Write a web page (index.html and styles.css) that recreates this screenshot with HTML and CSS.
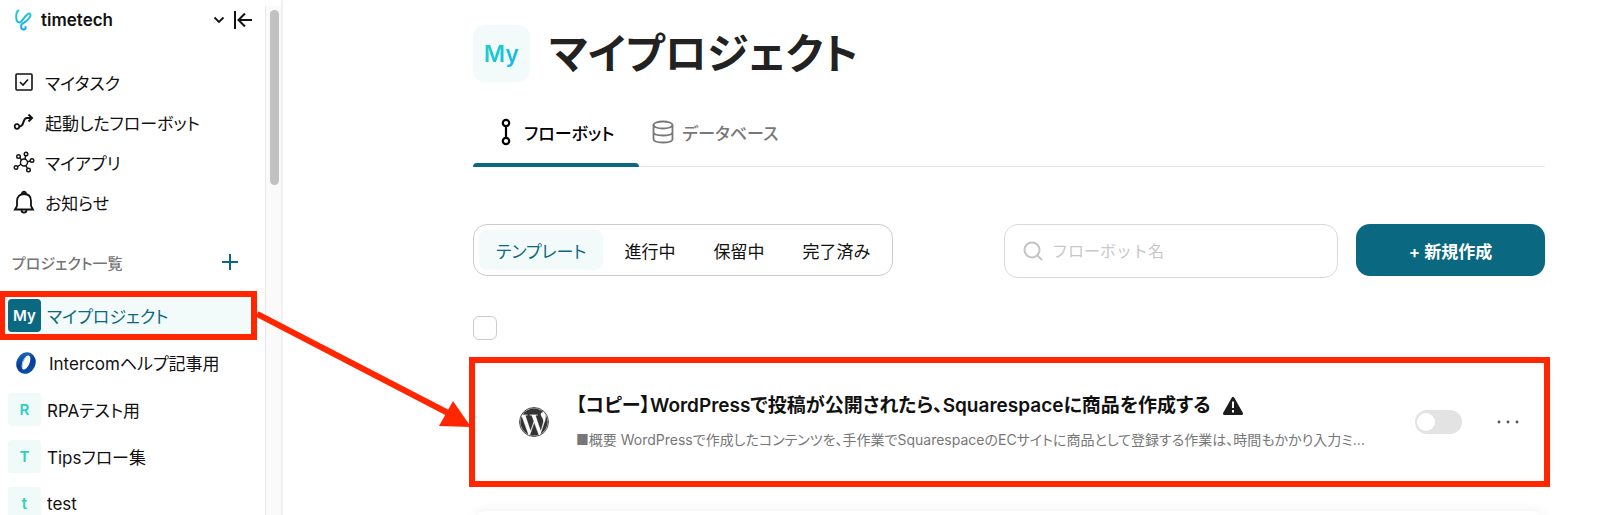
FILE: index.html
```html
<!DOCTYPE html>
<html lang="ja">
  <head>
    <meta charset="utf-8">
    <meta name="viewport" content="width=device-width, initial-scale=1">
    <link rel="stylesheet" href="styles.css">
    <title>マイプロジェクト</title>
  </head>
  <body>
    <div class="app">
      <aside class="sidebar">
        <div class="sidebarContent">
          <header class="workspace">
            <svg class="logo" width="20" height="24" viewBox="0 0 20 24" fill="none">
              <defs>
                <linearGradient id="logoGradient" x1="0" y1="0" x2="0" y2="1">
                  <stop offset="0" stop-color="#22d3c5"/>
                  <stop offset="1" stop-color="#12a9f5"/>
                </linearGradient>
              </defs>
              <path d="M5.500 2.500C2.500 4 2 14.500 6.500 14.500C9 14.500 13 5 16.500 5.500C20 7 14 13.500 10.500 15C7 16.500 7.500 21.500 10.500 21.500C12.500 21.500 13 20 12.500 19" stroke="url(#logoGradient)" stroke-width="2" stroke-linecap="round"/>
            </svg>
            <span class="workspaceName">timetech</span>
            <button class="iconButton" aria-label="ワークスペース">
              <svg width="12" height="8" viewBox="0 0 12 8" fill="none" stroke="#111" stroke-width="1.800"><path d="M1.500 1.500L6 6L10.500 1.500"/></svg>
            </button>
            <button class="iconButton" aria-label="閉じる">
              <svg width="20" height="20" viewBox="0 0 20 20" fill="none" stroke="#111" stroke-width="2"><path d="M2 1V19M19 10H6M12 3.500L5.500 10L12 16.500"/></svg>
            </button>
          </header>

          <nav class="menu">
            <a class="menuItem" href="#">
              <svg width="22" height="22" viewBox="0 0 22 22" fill="none" stroke="#111" stroke-width="1.600"><rect x="3" y="3" width="16" height="16" rx="1"/><path d="M7 11L10 14L15 8.500"/></svg>
              マイタスク
            </a>
            <a class="menuItem" href="#">
              <svg width="22" height="22" viewBox="0 0 22 22" fill="none" stroke="#111" stroke-width="2"><circle cx="4" cy="15.500" r="2.300" stroke-width="1.700"/><path d="M6.500 15.500C12 15.500 9 7 14 7H19M15.500 3.500L19 7L15.500 10.500"/></svg>
              起動したフローボット
            </a>
            <a class="menuItem" href="#">
              <svg width="22" height="22" viewBox="0 0 22 22" fill="none" stroke="#111" stroke-width="1.400"><circle cx="11" cy="11.500" r="3.500"/><circle cx="5.500" cy="5.500" r="1.800"/><circle cx="13" cy="3" r="1.800"/><circle cx="19" cy="9.500" r="1.800"/><circle cx="15.500" cy="19" r="1.800"/><circle cx="3" cy="16.500" r="1.800"/><path d="M6.800 6.800L8.600 9M12.600 4.800L12 8M17.200 10L14.500 10.800M14.500 17.400L12.800 14.700M4.700 15.500L7.800 13.300"/></svg>
              マイアプリ
            </a>
            <a class="menuItem" href="#">
              <svg width="22" height="24" viewBox="0 0 22 24" fill="none" stroke="#111" stroke-width="1.800"><path d="M2 19.500L4 16V11C4 6.500 6.800 4 11 4C15.200 4 18 6.500 18 11V16L20 19.500ZM9 4C8.600 1 13.400 1 13 4M8.500 20C8.500 23.500 13.500 23.500 13.500 20"/></svg>
              お知らせ
            </a>
          </nav>

          <div class="sectionHead">
            <h2 class="sectionTitle">プロジェクト一覧</h2>
            <button class="iconButton" aria-label="プロジェクトを追加">
              <svg width="16" height="16" viewBox="0 0 16 16" stroke="#0a6880" stroke-width="2"><path d="M8 0V16M0 8H16"/></svg>
            </button>
          </div>

          <nav class="projects">
            <a class="project current" href="#"><span class="avatar avatarDark">My</span>マイプロジェクト</a>
            <a class="project" href="#">
              <span class="avatar avatarPlain">
                <svg width="22" height="22" viewBox="0 0 22 22">
                  <defs>
                    <linearGradient id="ringGradient" x1="0" y1="0" x2="1" y2="1">
                      <stop offset="0" stop-color="#1f79c8"/>
                      <stop offset=".5" stop-color="#083c96"/>
                      <stop offset="1" stop-color="#0b56ae"/>
                    </linearGradient>
                  </defs>
                  <ellipse cx="11" cy="11" rx="9.500" ry="11" transform="rotate(25 11 11)" fill="url(#ringGradient)"/>
                  <ellipse cx="11" cy="10.500" rx="3.600" ry="7.500" transform="rotate(22 11 10.500)" fill="#fff"/>
                  <path d="M13.500 4C9 6 7 11 8 17C6 13 7 6 13.500 4Z" fill="#6bb5ea"/>
                </svg>
              </span>
              Intercomヘルプ記事用
            </a>
            <a class="project" href="#"><span class="avatar">R</span>RPAテスト用</a>
            <a class="project" href="#"><span class="avatar">T</span>Tipsフロー集</a>
            <a class="project" href="#"><span class="avatar">t</span>test</a>
          </nav>
        </div>
        <div class="scrollTrack"><div class="scrollThumb"></div></div>
      </aside>

      <main class="main">
        <header class="pageHead">
          <span class="pageIcon"><span class="pageIconText">My</span></span>
          <h1 class="pageTitle">マイプロジェクト</h1>
        </header>

        <nav class="tabs">
          <a class="tab activeTab" href="#">
            <svg width="12" height="28" viewBox="0 0 12 28" fill="none" stroke="#000" stroke-width="2.200"><circle cx="6" cy="5" r="3.200"/><circle cx="6" cy="23" r="3.200"/><path d="M6 8V20"/></svg>
            フローボット
          </a>
          <a class="tab" href="#">
            <svg width="22" height="24" viewBox="0 0 22 24" fill="none" stroke="#777" stroke-width="1.800"><ellipse cx="11" cy="5" rx="9.500" ry="3.500"/><path d="M1.500 5V19C1.500 21.500 6 22.500 11 22.500S20.500 21.500 20.500 19V5M1.500 12C1.500 14.500 6 15.500 11 15.500S20.500 14.500 20.500 12"/></svg>
            データベース
          </a>
        </nav>

        <div class="toolbar">
          <div class="filters">
            <button class="filter chosen">テンプレート</button>
            <button class="filter">進行中</button>
            <button class="filter">保留中</button>
            <button class="filter">完了済み</button>
          </div>
          <label class="search">
            <svg width="20" height="20" viewBox="0 0 20 20" fill="none" stroke="#c4c4c4" stroke-width="2"><circle cx="9" cy="9" r="7.500"/><path d="M14.500 14.500L19 19"/></svg>
            <input class="searchInput" type="text" placeholder="フローボット名" aria-label="フローボット名">
          </label>
          <button class="createButton">+ 新規作成</button>
        </div>

        <input class="selectAll" type="checkbox" aria-label="すべて選択">

        <div class="cards">
          <article class="card marked">
            <svg class="cardIcon" width="30" height="30" viewBox="0 0 24 24" fill="#333" stroke="#333" stroke-width=".2">
              <path d="M21.469 6.825c.84 1.537 1.318 3.300 1.318 5.175 0 3.979-2.156 7.456-5.363 9.325l3.295-9.527c.615-1.540.82-2.771.82-3.864 0-.405-.026-.78-.07-1.110m-7.981.105c.647-.03 1.232-.105 1.232-.105.582-.075.514-.93-.067-.899 0 0-1.755.135-2.880.135-1.064 0-2.850-.15-2.850-.15-.585-.03-.661.855-.075.885 0 0 .54.061 1.125.09l1.680 4.605-2.370 7.080L5.354 6.900c.649-.03 1.234-.1 1.234-.1.585-.075.516-.93-.065-.896 0 0-1.746.138-2.874.138-.2 0-.438-.008-.69-.015C4.911 3.150 8.235 1.215 12 1.215c2.809 0 5.365 1.072 7.286 2.833-.046-.003-.091-.009-.141-.009-1.060 0-1.812.923-1.812 1.914 0 .89.513 1.643 1.060 2.531.411.72.89 1.643.89 2.977 0 .915-.354 1.994-.821 3.479l-1.075 3.585-3.900-11.610zM12 22.784c-1.059 0-2.081-.153-3.048-.437l3.237-9.406 3.315 9.087c.024.053.05.101.078.149-1.120.393-2.325.609-3.582.609M1.211 12c0-1.564.336-3.050.935-4.390L7.290 21.709C3.694 19.960 1.212 16.271 1.211 12"/>
              <circle cx="12" cy="12" r="11.600" fill="none" stroke-width=".7"/>
            </svg>
            <div class="cardText">
              <h3 class="cardTitle">
                【コピー】WordPressで投稿が公開されたら、Squarespaceに商品を作成する
                <svg width="20" height="18" viewBox="0 0 20 18"><path d="M10 1.500L18.500 16.500H1.500Z" fill="#1c1c1c" stroke="#1c1c1c" stroke-width="3" stroke-linejoin="round"/><path d="M10 4.500V11M10 13V15.500" stroke="#fff" stroke-width="2"/></svg>
              </h3>
              <p class="cardDescription">■概要 WordPressで作成したコンテンツを、手作業でSquarespaceのECサイトに商品として登録する作業は、時間もかかり入力ミ...</p>
            </div>
            <input class="toggle" type="checkbox" role="switch" aria-label="有効">
            <button class="iconButton moreButton" aria-label="メニュー">
              <svg width="22" height="4" viewBox="0 0 22 4" fill="#555"><circle cx="2" cy="2" r="1.400"/><circle cx="11" cy="2" r="1.400"/><circle cx="20" cy="2" r="1.400"/></svg>
            </button>
          </article>
          <article class="card"></article>
        </div>
      </main>

      <svg class="arrow" width="218" height="130" viewBox="0 0 218 130">
        <path d="M1 14L194 114" stroke="#ff2600" stroke-width="6"/>
        <path d="M197 101L215 127L183 126Z" fill="#ff2600"/>
      </svg>
    </div>
  </body>
</html>
```
FILE: styles.css
```css
* {
  box-sizing: border-box;
  margin: 0;
  padding: 0;
}
body {
  background-color: #fff;
  color: #111;
  font-family: Inter, "Noto Sans CJK JP", sans-serif;
  font-size: 17px;
  font-feature-settings: "palt";
}
a {
  color: inherit;
  text-decoration: none;
}
button,
input {
  font: inherit;
  font-feature-settings: inherit;
  color: inherit;
  border: none;
  background: none;
}
svg {
  flex: none;
}
.app {
  position: relative;
  display: flex;
  height: 100vh;
  overflow: hidden;
}

/* sidebar */
.sidebar {
  display: flex;
  flex: none;
  width: 283px;
  border-right: 2px solid #f0f0f0;
}
.sidebarContent {
  flex: 1;
}
.workspace {
  display: flex;
  align-items: center;
  gap: 8px;
  height: 39px;
  padding: 0 12px 0 13px;
}
.workspaceName {
  flex: 1;
  font-weight: 600;
}
.iconButton {
  display: flex;
}
.menu {
  padding-top: 23px;
}
.menuItem {
  display: flex;
  align-items: center;
  gap: 10px;
  height: 40px;
  padding-left: 13px;
}
.sectionHead {
  display: flex;
  align-items: center;
  justify-content: space-between;
  height: 80px;
  padding: 0 27px 0 12px;
}
.sectionTitle {
  font-size: 15px;
  font-weight: 500;
  color: #757575;
}
.projects {
  display: flex;
  flex-direction: column;
  margin-top: -10px;
}
.project {
  display: flex;
  align-items: center;
  gap: 6px;
  height: 47px;
  padding-left: 8px;
}
.current {
  position: relative;
  margin-right: 8px;
  background-color: #f3fafa;
  color: #0a6880;
}
.current::after {
  content: "";
  position: absolute;
  inset: -1px 0 -1px -1px;
  border: 6px solid #ff2600;
  pointer-events: none;
}
.avatar {
  display: flex;
  align-items: center;
  justify-content: center;
  width: 33px;
  height: 33px;
  border-radius: 4px;
  background-color: #f0faf9;
  color: #2bcfc4;
  font-size: 15px;
  font-weight: 600;
}
.avatarDark {
  background-color: #0a6880;
  color: #fff;
}
.avatarPlain {
  width: 35px;
  background: none;
}
.scrollTrack {
  width: 16px;
  margin-top: 6px;
  padding: 4px 2px 0 4px;
  border-left: 1px solid #e8e8e8;
  background-color: #fafafa;
}
.scrollThumb {
  width: 9px;
  height: 175px;
  border-radius: 5px;
  background-color: #c1c1c1;
}

/* main */
.main {
  flex: 1;
  min-width: 0;
  padding: 25px 55px 0 190px;
}
.pageHead {
  display: flex;
  align-items: center;
  gap: 19px;
}
.pageIcon {
  display: flex;
  align-items: center;
  justify-content: center;
  width: 57px;
  height: 57px;
  border-radius: 12px;
  background-color: #f2fafa;
  font-size: 23px;
  font-weight: 600;
}
.pageIconText {
  background: linear-gradient(135deg, #22d3c0, #12b5f0);
  background-clip: text;
  color: transparent;
}
.pageTitle {
  font-size: 42px;
  line-height: 57px;
  color: #222;
}
.tabs {
  display: flex;
  height: 85px;
  padding-top: 16px;
  border-bottom: 1px solid #e2e6ec;
}
.tab {
  display: flex;
  align-items: center;
  gap: 8px;
  padding: 0 25px 0 13px;
  font-weight: 500;
  color: #777;
}
.activeTab {
  position: relative;
  gap: 12px;
  padding-left: 27px;
  color: #000;
}
.activeTab::after {
  content: "";
  position: absolute;
  left: 0;
  right: 0;
  bottom: -1px;
  height: 4px;
  border-radius: 4px 4px 0 0;
  background-color: #0a6880;
}
.toolbar {
  display: flex;
  align-items: flex-start;
  margin-top: 57px;
}
.filters {
  display: flex;
  gap: 4px;
  height: 52px;
  padding: 5px;
  border: 1px solid #ccc;
  border-radius: 14px;
}
.filter {
  padding: 0 17px;
  border-radius: 8px;
}
.chosen {
  background-color: #f3fafa;
  color: #0a6880;
}
.search {
  display: flex;
  align-items: center;
  gap: 9px;
  width: 334px;
  height: 54px;
  margin-left: auto;
  padding: 0 18px;
  border: 1px solid #d5dae0;
  border-radius: 14px;
}
.searchInput {
  flex: 1;
  min-width: 0;
  outline: none;
  font-size: 16px;
  font-feature-settings: normal;
}
.searchInput::placeholder {
  color: #c8c8c8;
}
.createButton {
  width: 189px;
  height: 52px;
  margin-left: 18px;
  border-radius: 14px;
  background-color: #0a6880;
  color: #fff;
  font-weight: 600;
}
.selectAll {
  display: block;
  appearance: none;
  width: 24px;
  height: 24px;
  margin-top: 38px;
  border: 1px solid #ccc;
  border-radius: 6px;
}
.cards {
  display: flex;
  flex-direction: column;
  gap: 28px;
  margin-top: 20px;
}
.card {
  display: flex;
  flex: none;
  align-items: center;
  height: 123px;
  padding: 0 26px 0 46px;
  border-radius: 14px;
  box-shadow: 0 0 12px rgba(0, 0, 0, 0.07);
}
.marked {
  position: relative;
}
.marked::after {
  content: "";
  position: absolute;
  inset: -3px -5px -4px -4px;
  border: 6px solid #ff2600;
  pointer-events: none;
}
.cardText {
  flex: 1;
  min-width: 0;
  margin-left: 27px;
}
.cardTitle {
  display: flex;
  align-items: center;
  gap: 12px;
  font-size: 19px;
  font-weight: 600;
  line-height: 28px;
  white-space: nowrap;
}
.cardDescription {
  margin-top: 8px;
  font-size: 14px;
  line-height: 24px;
  color: #777;
  overflow: hidden;
  text-overflow: ellipsis;
  white-space: nowrap;
}
.toggle {
  flex: none;
  appearance: none;
  width: 47px;
  height: 24px;
  margin-left: 4px;
  padding: 3px 2px;
  border-radius: 12px;
  background-color: #e3e3e3;
}
.toggle::before {
  content: "";
  display: block;
  width: 18px;
  height: 18px;
  border-radius: 50%;
  background-color: #fff;
}
.moreButton {
  margin-left: 35px;
}

/* arrow from the current project to its flowbot */
.arrow {
  position: absolute;
  top: 300px;
  left: 256px;
}
```
